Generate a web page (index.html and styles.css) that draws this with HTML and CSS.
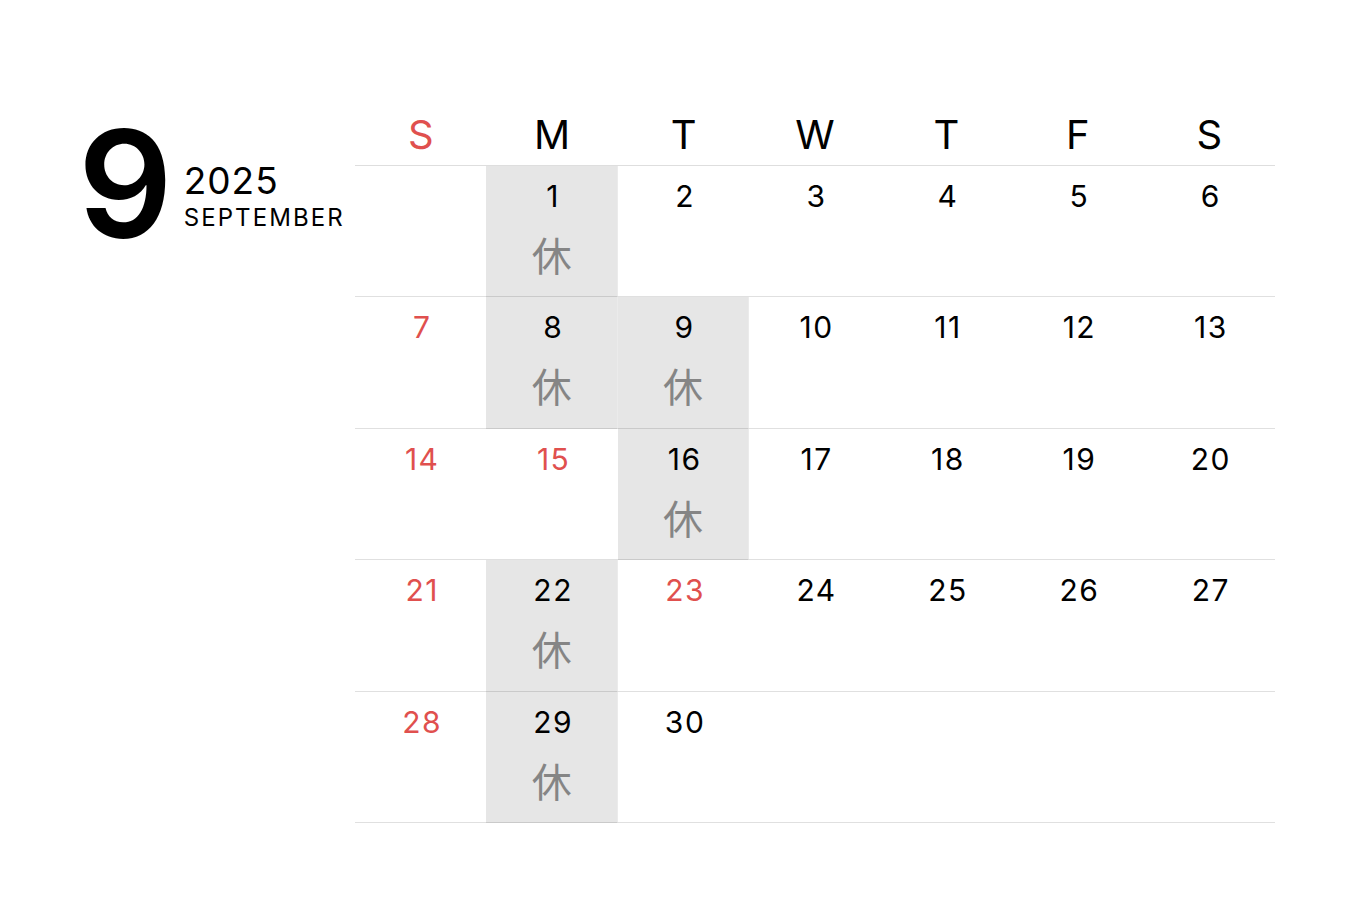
FILE: index.html
```html
<!DOCTYPE html>
<html lang="ja">
<head>
<meta charset="utf-8">
<title>2025 September</title>
<link rel="stylesheet" href="styles.css">
</head>
<body>
<div class="page">
  <div class="side">
    <div class="month-num">9</div>
    <div class="month-text">
      <div class="year">2025</div>
      <div class="month-name">SEPTEMBER</div>
    </div>
  </div>
  <div class="calendar">
    <div class="head red">S</div>
    <div class="head">M</div>
    <div class="head">T</div>
    <div class="head">W</div>
    <div class="head">T</div>
    <div class="head">F</div>
    <div class="head">S</div>

    <div class="cell"></div>
    <div class="cell off"><span class="num">1</span><span class="kyu">休</span></div>
    <div class="cell"><span class="num">2</span></div>
    <div class="cell"><span class="num">3</span></div>
    <div class="cell"><span class="num">4</span></div>
    <div class="cell"><span class="num">5</span></div>
    <div class="cell"><span class="num">6</span></div>

    <div class="cell red"><span class="num">7</span></div>
    <div class="cell off"><span class="num">8</span><span class="kyu">休</span></div>
    <div class="cell off"><span class="num">9</span><span class="kyu">休</span></div>
    <div class="cell"><span class="num">10</span></div>
    <div class="cell"><span class="num">11</span></div>
    <div class="cell"><span class="num">12</span></div>
    <div class="cell"><span class="num">13</span></div>

    <div class="cell red"><span class="num">14</span></div>
    <div class="cell red"><span class="num">15</span></div>
    <div class="cell off"><span class="num">16</span><span class="kyu">休</span></div>
    <div class="cell"><span class="num">17</span></div>
    <div class="cell"><span class="num">18</span></div>
    <div class="cell"><span class="num">19</span></div>
    <div class="cell"><span class="num">20</span></div>

    <div class="cell red"><span class="num">21</span></div>
    <div class="cell off"><span class="num">22</span><span class="kyu">休</span></div>
    <div class="cell red"><span class="num">23</span></div>
    <div class="cell"><span class="num">24</span></div>
    <div class="cell"><span class="num">25</span></div>
    <div class="cell"><span class="num">26</span></div>
    <div class="cell"><span class="num">27</span></div>

    <div class="cell red"><span class="num">28</span></div>
    <div class="cell off"><span class="num">29</span><span class="kyu">休</span></div>
    <div class="cell"><span class="num">30</span></div>
    <div class="cell"></div>
    <div class="cell"></div>
    <div class="cell"></div>
    <div class="cell"></div>
  </div>
</div>
</body>
</html>
```

FILE: styles.css
```css
html, body {
  margin: 0;
  padding: 0;
  background: #ffffff;
}

body {
  font-family: Inter, "Noto Sans", "Noto Sans CJK JP", sans-serif;
  color: #000000;
}

.page {
  display: flex;
  align-items: flex-start;
  padding: 100px 0 0 78px;
}

.side {
  width: 277px;
  display: flex;
  align-items: flex-end;
  gap: 13px;
  padding-top: 19px;
}

.month-num {
  font-size: 148px;
  font-weight: 600;
  line-height: 130px;
  letter-spacing: -2px;
}

.month-text {
  padding-bottom: 17px;
}

.year {
  font-size: 37px;
  line-height: 40px;
  letter-spacing: 1px;
  margin-bottom: 3px;
}

.month-name {
  font-size: 24px;
  line-height: 28px;
  letter-spacing: 2.1px;
}

.calendar {
  width: 920px;
  display: grid;
  grid-template-columns: repeat(7, 1fr);
}

.head {
  height: 65px;
  border-bottom: 1px solid rgba(0, 0, 0, 0.13);
  font-size: 40px;
  line-height: 70px;
  text-align: center;
}

.cell {
  aspect-ratio: 1 / 1;
  box-sizing: border-box;
  border-bottom: 1px solid rgba(0, 0, 0, 0.12);
  display: flex;
  flex-direction: column;
  align-items: center;
  padding-top: 15px;
}

.cell.off {
  background: #e6e6e6;
  border-right: 1px solid #ebebeb;
}

.num {
  font-size: 30px;
  line-height: 30px;
  letter-spacing: 1.5px;
  padding-left: 3px;
}

.kyu {
  font-family: "Noto Sans CJK JP", sans-serif;
  font-size: 40px;
  line-height: 40px;
  color: #858585;
  margin-top: 23px;
}

.red {
  color: #e0504e;
}
```
